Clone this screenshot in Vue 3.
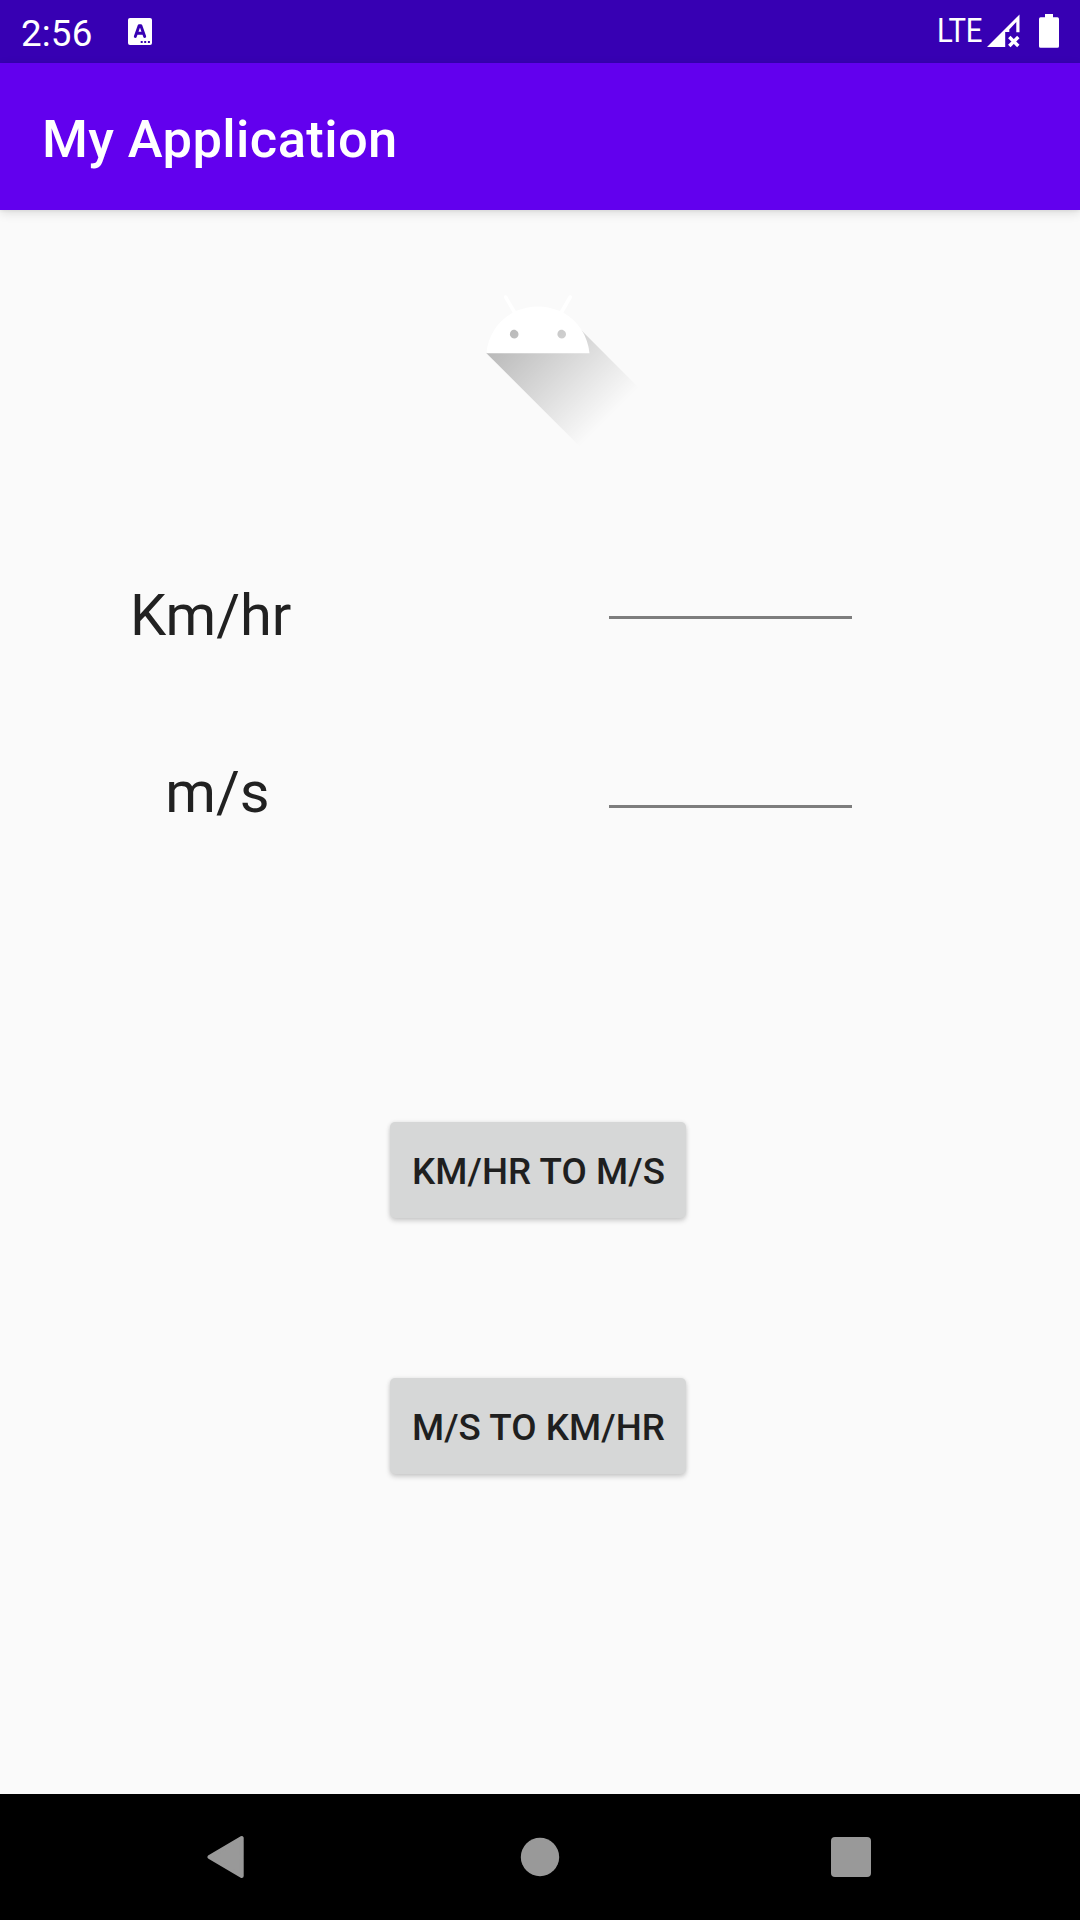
<script setup>
const rows = [
  { label: 'Km/hr', name: 'kmhr' },
  { label: 'm/s', name: 'ms' },
]
const buttons = ['KM/HR TO M/S', 'M/S TO KM/HR']
</script>

<template>
  <div class="screen">
    <header class="status">
      <span class="clock">2:56</span>
      <svg class="ime" width="24" height="27" viewBox="0 0 24 27">
        <rect width="24" height="27" rx="2" fill="#fff" />
        <path d="M7.3 18.4 L11.1 7.7 h1.8 L16.7 18.4 M8.9 15.2 h6.4" fill="none" stroke="#3700b3" stroke-width="2.9" stroke-linecap="round" stroke-linejoin="round" />
        <path d="M12.7 23h2v2h-2zM16.2 23h2v2h-2zM19.9 23h2v2h-2z" fill="#3700b3" />
      </svg>
      <span class="lte">LTE</span>
      <svg class="signal" width="33" height="34" viewBox="0 0 33 34" fill="#fff">
        <path d="M32.5 0.5V18.2H29.3V8L22.3 15.4V18H18.2V33H0Z" />
        <path d="M22.3 23L31.3 32M31.3 23L22.3 32" stroke="#fff" stroke-width="3.4" />
      </svg>
      <svg class="battery" width="20" height="34" viewBox="0 0 20 34">
        <path d="M6 0h8v3.3h4.4q1.6 0 1.6 1.6v27.3q0 1.6-1.6 1.6H1.6Q0 33.8 0 32.2V4.9Q0 3.3 1.6 3.3H6z" fill="#fff" />
      </svg>
    </header>
    <div class="appbar"><h1>My Application</h1></div>
    <main>
      <svg class="logo" width="242" height="242" viewBox="0 0 108 108">
        <defs>
          <linearGradient id="shade" gradientUnits="userSpaceOnUse" x1="42.949" y1="49.598" x2="85.848" y2="92.496">
            <stop offset="0" stop-color="#000" stop-opacity="0.267" />
            <stop offset="1" stop-color="#000" stop-opacity="0" />
          </linearGradient>
        </defs>
        <path fill="url(#shade)" d="M31,63.928c0,0 6.4,-11 12.1,-13.1c7.2,-2.6 26,-1.4 26,-1.4l38.1,38.1L107,108.928l-32,-1L31,63.928z" />
        <path fill="#fff" d="M65.3,45.828l3.8,-6.6c0.2,-0.4 0.1,-0.9 -0.3,-1.1c-0.4,-0.2 -0.9,-0.1 -1.1,0.3l-3.9,6.7c-6.3,-2.8 -13.4,-2.8 -19.7,0l-3.9,-6.7c-0.2,-0.4 -0.7,-0.5 -1.1,-0.3C38.8,38.328 38.7,38.828 38.9,39.228l3.8,6.6C36.2,49.428 31.7,56.028 31,63.928h46C76.3,56.028 71.8,49.428 65.3,45.828zM43.4,57.328c-0.8,0 -1.5,-0.5 -1.8,-1.2c-0.3,-0.7 -0.1,-1.5 0.4,-2.1c0.5,-0.5 1.4,-0.7 2.1,-0.4c0.7,0.3 1.2,1 1.2,1.8C45.3,56.528 44.5,57.328 43.4,57.328zM64.6,57.328c-0.8,0 -1.5,-0.5 -1.8,-1.2s-0.1,-1.5 0.4,-2.1c0.5,-0.5 1.4,-0.7 2.1,-0.4c0.7,0.3 1.2,1 1.2,1.8C66.5,56.528 65.6,57.328 64.6,57.328z" />
      </svg>
      <div v-for="r in rows" :key="r.name" class="row" :class="r.name">
        <span class="label">{{ r.label }}</span>
        <input class="field" type="text" :aria-label="r.label" />
      </div>
      <button v-for="b in buttons" :key="b">{{ b }}</button>
    </main>
    <nav>
      <svg width="38" height="44" viewBox="0 0 38 44"><path d="M2.5 22L34.7 3v38z" fill="#999" stroke="#999" stroke-width="4" stroke-linejoin="round" /></svg>
      <svg class="home" width="40" height="40" viewBox="0 0 40 40"><circle cx="20" cy="20" r="19.2" fill="#999" /></svg>
      <svg width="40" height="40" viewBox="0 0 40 40"><rect width="40" height="40" rx="4" fill="#999" /></svg>
    </nav>
  </div>
</template>

<style>
body { margin: 0; overflow: hidden; }
</style>

<style scoped>
.screen {
  width: 1080px;
  height: 1920px;
  display: flex;
  flex-direction: column;
  background: #fafafa;
  font-family: Roboto, sans-serif;
  color: #212121;
}
.screen svg { display: block; flex: none; }
.status {
  height: 63px;
  flex: none;
  display: flex;
  align-items: flex-start;
  box-sizing: border-box;
  padding: 0 21px;
  background: #3700b3;
  color: #fff;
}
.clock { font-size: 36.75px; line-height: 43px; margin-top: 12px; width: 107px; letter-spacing: 0.15px; }
.ime { margin-top: 18px; }
.lte {
  margin: 11px 0 0 auto;
  font-size: 32.6px;
  line-height: 40px;
  width: 48px;
  letter-spacing: -0.4px;
  transform: scaleX(0.9);
  transform-origin: 0 50%;
}
.signal { margin: 14px 0 0 2px; }
.battery { margin: 14px 0 0 19px; }
.appbar {
  height: 147px;
  flex: none;
  display: flex;
  align-items: center;
  padding-left: 42px;
  background: #6200ee;
  color: #fff;
  box-shadow: 0 3px 10px rgba(0, 0, 0, 0.12), 0 1px 3px rgba(0, 0, 0, 0.06);
}
h1 { margin: 4px 0 0; font-size: 52.5px; font-weight: 500; line-height: 62px; letter-spacing: 0.38px; }
main {
  flex: 1;
  display: flex;
  flex-direction: column;
  align-items: center;
}
.logo { margin-right: 4px; }
.row {
  width: 818px;
  height: 78px;
  display: flex;
  justify-content: space-between;
  align-items: flex-start;
}
.row.kmhr { margin-top: 128px; }
.row.ms { margin-top: 99px; }
.label {
  width: 160px;
  padding-top: 1px;
  font-size: 57.75px;
  line-height: 68px;
  text-align: center;
}
.kmhr .label { margin-left: -1px; }
.ms .label { margin-left: 6.5px; }
.field {
  box-sizing: border-box;
  width: 243px;
  height: 39px;
  margin: 0 97px 0 0;
  padding: 0;
  border: 0;
  border-bottom: 3px solid #7d7d7d;
  outline: none;
  background: transparent;
  font: inherit;
}
.ms .field { height: 51px; }
button {
  flex: none;
  width: 296px;
  height: 96px;
  margin: 287px 4px 0 0;
  padding: 2px 0 0 1px;
  border: 0;
  border-radius: 5px;
  background: #d6d7d7;
  color: #1f1f1f;
  font: 500 36.75px/43px Roboto, sans-serif;
  letter-spacing: 0.06px;
  white-space: nowrap;
  box-shadow: 0 3px 5px rgba(0, 0, 0, 0.17), 0 0 4px rgba(0, 0, 0, 0.08);
}
button + button { margin-top: 160px; }
nav {
  flex: none;
  height: 126px;
  box-sizing: border-box;
  display: flex;
  align-items: center;
  justify-content: space-between;
  padding: 0 209px 0 207px;
  background: #000;
}
.home { margin-left: 4px; }
</style>
